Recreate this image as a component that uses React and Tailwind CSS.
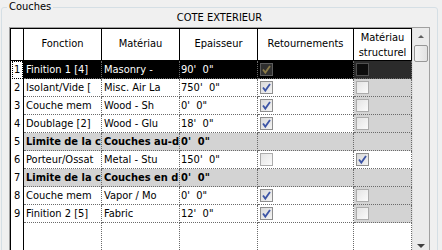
const rows = [
  { n: 1, f: 'Finition 1 [4]', m: 'Masonry -', e: `90'\u00a0\u00a00"`, ret: true, sel: true },
  { n: 2, f: 'Isolant/Vide [', m: 'Misc. Air La', e: `750'\u00a0\u00a00"`, ret: true },
  { n: 3, f: 'Couche mem', m: 'Wood - Sh', e: `0'\u00a0\u00a00"`, ret: true },
  { n: 4, f: 'Doublage [2]', m: 'Wood - Glu', e: `18'\u00a0\u00a00"`, ret: true },
  { n: 5, f: 'Limite de la c', m: 'Couches au-d', e: `0'\u00a0\u00a00"`, core: true },
  { n: 6, f: 'Porteur/Ossat', m: 'Metal - Stu', e: `150'\u00a0\u00a00"`, ret: false, struct: true },
  { n: 7, f: 'Limite de la c', m: 'Couches en d', e: `0'\u00a0\u00a00"`, core: true },
  { n: 8, f: 'Couche mem', m: 'Vapor / Mo', e: `0'\u00a0\u00a00"`, ret: true },
  { n: 9, f: 'Finition 2 [5]', m: 'Fabric', e: `12'\u00a0\u00a00"`, ret: true },
]

const cols = 'grid grid-cols-[14px_78px_78px_78px_96px_58px]'

function Check({ color = '#3d55a6' }) {
  return (
    <svg width="11" height="11" viewBox="0 0 11 11">
      <path d="M2 5.5 L4.3 8.6 L9 2" fill="none" stroke={color} strokeWidth="1.8" />
    </svg>
  )
}

function Box({ checked, variant }) {
  const styles = {
    normal: 'border-[#8e8e8e] bg-gradient-to-br from-[#d9d9d9] to-[#f4f4f4]',
    off: 'border-[#acacac] bg-gradient-to-br from-[#e4e4e4] to-[#fbfbfb]',
    selRet: 'border-[#5c5c5c] bg-[#2f2f2f]',
    selStruct: 'border-[#505050] bg-[#0c0c0c]',
  }
  return (
    <div className={`w-[13px] h-[13px] border flex items-center justify-center ${styles[variant]}`}>
      {checked && <Check color={variant === 'selRet' ? '#8a7a48' : '#3d55a6'} />}
    </div>
  )
}

function Row({ r }) {
  const dot = 'border-r border-b border-dotted border-[#6a6a6a]'
  const bg = r.sel ? 'bg-black text-white' : r.core ? 'bg-[#d3d3d3] font-bold' : 'bg-white'
  const structBg = r.sel ? 'bg-[#2b2b2b]' : r.struct ? 'bg-white' : 'bg-[#d3d3d3]'
  return (
    <div className={`${cols} h-[18px]`}>
      <div className="border-l border-r border-black bg-white pl-px">
        {r.sel ? (
          <div className="h-full border border-dotted border-black leading-[15px] pl-px">{r.n}</div>
        ) : (
          <div className="leading-[17px] pl-[2px]">{r.n}</div>
        )}
      </div>
      <div className={`${dot} ${bg} pl-[2px] leading-[17px] whitespace-nowrap overflow-hidden`}>{r.f}</div>
      <div className={`${dot} ${bg} pl-[2px] leading-[17px] whitespace-nowrap overflow-hidden`}>{r.m}</div>
      <div className={`${dot} ${bg} pl-[1px] leading-[17px] whitespace-nowrap overflow-hidden`}>{r.e}</div>
      <div className={`${dot} ${bg} pl-[2px] flex items-center`}>
        {!r.core && <Box checked={r.ret} variant={r.sel ? 'selRet' : r.ret ? 'normal' : 'off'} />}
      </div>
      <div className={`${dot} ${r.core ? 'bg-[#d3d3d3]' : structBg} pl-[2px] flex items-center`}>
        {!r.core && <Box checked={r.struct} variant={r.sel ? 'selStruct' : r.struct ? 'normal' : 'off'} />}
      </div>
    </div>
  )
}

function Scrollbar() {
  return (
    <div className="w-[17px] flex flex-col bg-[#ebebeb] border-l border-[#e0e0e0]">
      <div className="h-[17px] flex items-center justify-center">
        <div className="w-0 h-0 border-l-[3px] border-r-[3px] border-b-[3px] border-l-transparent border-r-transparent border-b-[#606060]" />
      </div>
      <div className="h-[17px] mx-px rounded-[2px] border border-[#979797] bg-gradient-to-r from-[#f4f4f4] to-[#e2e2e2]" />
      <div className="flex-1" />
      <div className="h-[17px] flex items-center justify-center">
        <div className="w-0 h-0 border-l-[4px] border-r-[4px] border-t-[4px] border-l-transparent border-r-transparent border-t-[#404040]" />
      </div>
    </div>
  )
}

export default function App() {
  return (
    <div
      className="w-[442px] h-[250px] overflow-hidden bg-[#f0f0f0] text-[11px] text-black"
      style={{ fontFamily: '"DejaVu Sans Condensed", "DejaVu Sans", sans-serif', fontStretch: 'condensed' }}
    >
      <fieldset className="ml-px w-[437px] border border-[#d5dfe5] rounded-[3px] px-[7px] pb-0 pt-0">
        <legend className="px-[2px] -ml-[2px] leading-[14px]">Couches</legend>
        <div className="-mt-[3px] h-[16px] leading-[13px] text-center">COTE EXTERIEUR</div>
        <div className="h-[227px] flex border-l border-t border-r border-[#a0a0a0]">
          <div className="w-[402px] flex flex-col">
            <div className={`${cols} h-[33px]`}>
              <div className="border-l border-t border-b border-r border-black bg-white" />
              {['Fonction', 'Matériau', 'Epaisseur', 'Retournements'].map(h => (
                <div key={h} className="border-t border-b border-r border-black bg-white flex items-center justify-center">
                  {h}
                </div>
              ))}
              <div className="border-t border-b border-r border-black bg-white flex flex-col items-center justify-center leading-[15px]">
                <span>Matériau</span>
                <span>structurel</span>
              </div>
            </div>
            {rows.map(r => <Row key={r.n} r={r} />)}
            <div className={`${cols} flex-1`}>
              <div className="border-l border-r border-black bg-white" />
              {[0, 1, 2, 3, 4].map(i => (
                <div key={i} className="border-r border-dotted border-[#6a6a6a] bg-white" />
              ))}
            </div>
          </div>
          <Scrollbar />
        </div>
      </fieldset>
    </div>
  )
}
